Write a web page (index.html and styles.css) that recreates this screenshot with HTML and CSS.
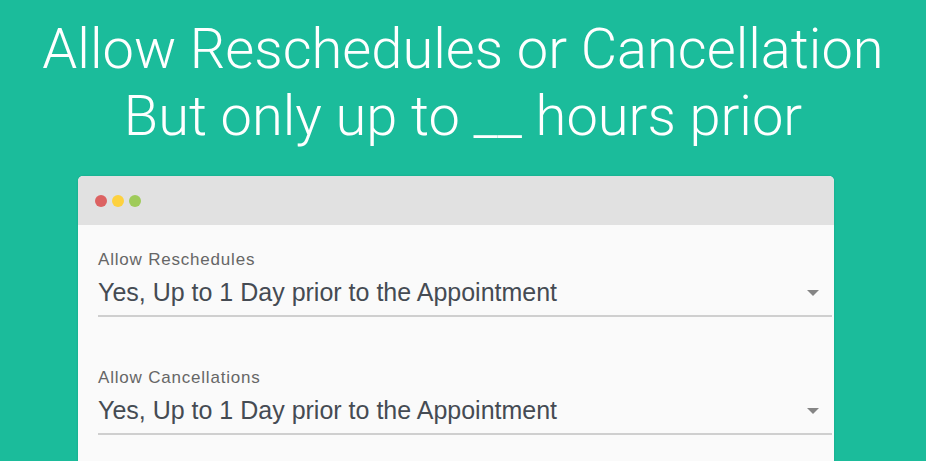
FILE: index.html
```html
<!DOCTYPE html>
<html>
<head>
<meta charset="utf-8">
<link rel="stylesheet" href="styles.css">
</head>
<body>
<h1 class="headline">Allow Reschedules or Cancellation<br>But only up to __ hours prior</h1>
<div class="window">
  <div class="titlebar">
    <span class="dot dot-red"></span>
    <span class="dot dot-yellow"></span>
    <span class="dot dot-green"></span>
  </div>
  <div class="content">
    <div class="field">
      <div class="label">Allow Reschedules</div>
      <div class="select">
        <span class="value">Yes, Up to 1 Day prior to the Appointment</span>
        <span class="caret"></span>
      </div>
    </div>
    <div class="field">
      <div class="label">Allow Cancellations</div>
      <div class="select">
        <span class="value">Yes, Up to 1 Day prior to the Appointment</span>
        <span class="caret"></span>
      </div>
    </div>
  </div>
</div>
</body>
</html>
```
FILE: styles.css
```css
html, body {
  margin: 0;
  padding: 0;
  background: #1bbc9b;
  overflow: hidden;
  height: 461px;
}
.headline {
  margin: 0;
  padding-top: 16px;
  text-align: center;
  font-family: Roboto, sans-serif;
  font-weight: 300;
  font-size: 56px;
  line-height: 67px;
  color: #ffffff;
}
.window {
  margin: 26px 0 0 78px;
  width: 756px;
  height: 300px;
  background: #fafafa;
  border-radius: 5px 5px 0 0;
  overflow: hidden;
  box-shadow: 0 0 2px rgba(0,0,0,0.15);
}
.titlebar {
  height: 49px;
  background: #e1e1e1;
  display: flex;
  align-items: center;
  gap: 5px;
  padding-left: 17px;
}
.dot {
  width: 12px;
  height: 12px;
  border-radius: 50%;
  display: block;
}
.dot-red { background: #dc6262; }
.dot-yellow { background: #fdd13f; }
.dot-green { background: #9fcb5a; }
.content {
  padding: 0 2px 0 20px;
}
.field {
  padding-top: 25px;
  margin-bottom: 26px;
}
.label {
  font-family: "Liberation Sans", Arial, sans-serif;
  font-size: 17px;
  letter-spacing: 0.8px;
  line-height: 20px;
  color: #666666;
}
.select {
  display: flex;
  align-items: center;
  justify-content: space-between;
  height: 47px;
  border-bottom: 2px solid #cfcfcf;
  box-sizing: border-box;
}
.value {
  font-family: "Liberation Sans", Arial, sans-serif;
  font-size: 25px;
  color: #454b53;
}
.caret {
  width: 0;
  height: 0;
  border-left: 6px solid transparent;
  border-right: 6px solid transparent;
  border-top: 6px solid #858585;
  margin-right: 13px;
}
```
